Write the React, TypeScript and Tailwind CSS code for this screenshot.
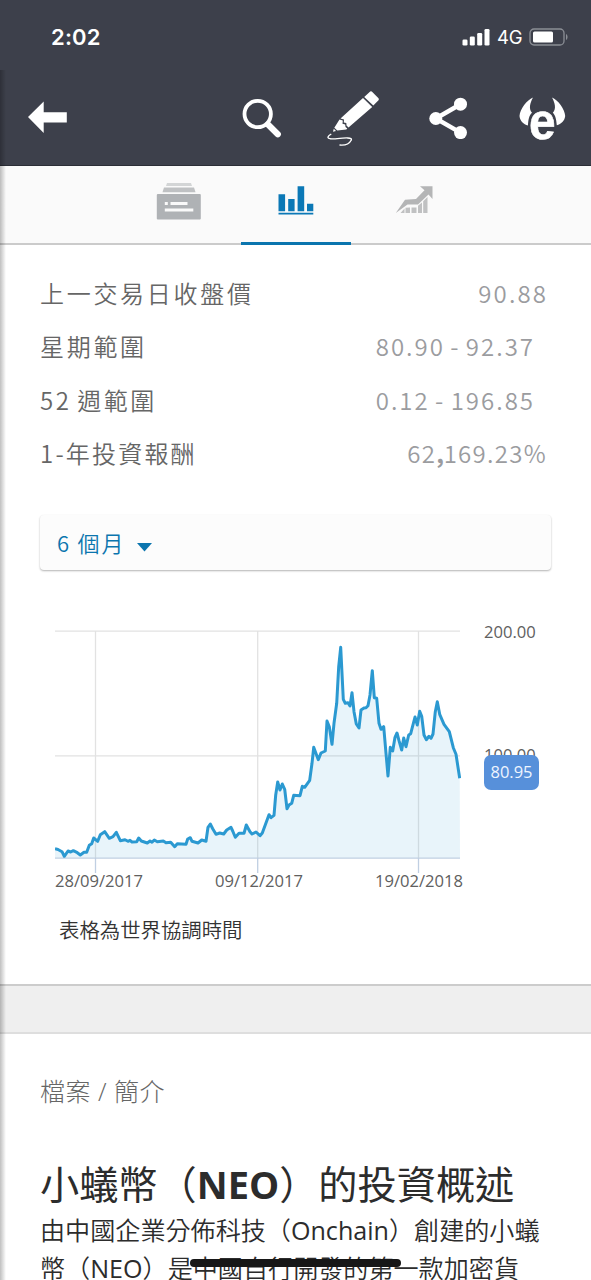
import type { ReactNode } from 'react'

const STATS = [
  { label: '上一交易日收盤價', value: '90.88', labelStyle: 'tracking-[2.7px]', valueStyle: 'pr-[43px] tracking-[2.1px]' },
  { label: '星期範圍', value: '80.90 - 92.37', labelStyle: 'tracking-[2.7px]', valueStyle: 'pr-[56px] tracking-[2px]' },
  { label: '52 週範圍', value: '0.12 - 196.85', labelStyle: 'tracking-[2.5px]', valueStyle: 'pr-[56px] tracking-[2px]' },
  { label: '1-年投資報酬', value: <>62<b className="tracking-[-0.5px]">,</b>169.23%</>, labelStyle: 'tracking-[2.2px]', valueStyle: 'pr-[44px] tracking-[1.3px]' },
]

const DATES = ['28/09/2017', '09/12/2017', '19/02/2018']

// x, y pairs in the chart's own viewBox
const LINE =
  '55,848.7 58,849.5 62,851.7 64.3,856.3 68,851 70.7,852 73.3,850.7 77.3,852.7 80.3,855 84,852.3 86.7,852.3 89.3,845.3 91.7,843.7 93.7,838 97.7,841.3 100.3,834.7 104.7,831.7 109.3,838.3 113,836.7 116.3,832.3 120.3,840.7 125,839.7 128,841.3 130,840.3 132,842 136.7,841.7 138.7,838 141.3,841 147.3,843 150,841 152,842.3 154.3,840 157.3,841.7 163.3,841 166,842.7 170.7,842.3 174.7,846.7 177.3,843.7 186,844.3 187.7,839 190.3,837.7 192,841.3 198,843 201.7,840 206,841.3 208,827.3 210.3,824 212.7,828.7 216,834.3 219.7,833 223.7,834 226.7,830 231,827.3 232.7,831 235.3,837.3 239,833.3 244,833.3 246.3,825 250,831.7 252,834 256,832 260,835.7 262.3,833 269,814.7 271,817.7 274,815.3 275.7,795 277.7,782 280,790 282.3,784 284.7,789.3 287,808.7 289,805 291.7,803.3 293.7,795.3 300,795.7 302.3,786.3 304.7,787.3 309.7,780.3 312,763.3 313.7,747.3 318.3,759.7 321,753 325.3,751 327,721 329.3,726.7 332,744.3 334,723.3 336.7,703.3 338.7,666.7 340.7,647.3 343.3,699.3 345.3,703.3 348,702.7 350,706 352,692.7 354,711.7 356.3,724 359,728 361,710 364,708 366,707.7 368,705.7 370,695 372.3,670.7 374.3,697.7 376.7,698.3 379,723.3 381,729.3 383.7,726.7 386,753.3 388,776 390.3,747.3 392.7,751 395,737.3 397,733 399,740.7 401.7,750 403.7,738 406,746.7 408.7,735 410.7,733.7 415,717 417.3,725 419.7,711.3 421.7,716.3 424,735 426.3,739.7 429,736.3 431,738.3 433,734 435.3,711.7 437.3,701.7 439.7,714.3 444,724.3 449.3,731.7 453.3,747.7 456,754.3 459.7,778.3'

function StatusBar() {
  return (
    <div className="flex h-[70px] items-start justify-between pl-[51px] pr-[22px] pt-[25px] text-white">
      <span className="font-[Inter,sans-serif] text-[22px] font-semibold leading-6 tracking-[0.2px]">2:02</span>
      <div className="flex items-center">
        <svg width="29" height="18" viewBox="0 0 29 18" fill="white">
          <rect x="0.5" y="11.5" width="5" height="6" rx="1.3" />
          <rect x="7.8" y="8.5" width="5" height="9" rx="1.3" />
          <rect x="15.2" y="5" width="5" height="12.5" rx="1.3" />
          <rect x="22.5" y="1" width="5" height="16.5" rx="1.3" />
        </svg>
        <span className="ml-[6px] w-[26px] font-[Inter,sans-serif] text-[18.5px] leading-6 tracking-[-0.3px]">4G</span>
        <svg className="ml-[6px]" width="40" height="18" viewBox="0 0 40 18">
          <rect x="1" y="1" width="34" height="16" rx="4" fill="none" stroke="#8b8e95" strokeWidth="1.3" />
          <rect x="4" y="3.5" width="20" height="11" rx="1.5" fill="white" />
          <path d="M37 6v6c2-1 2-5 0-6z" fill="#8b8e95" />
        </svg>
      </div>
    </div>
  )
}

function Toolbar() {
  return (
    <div className="flex h-[95px] items-center pl-[28px] text-white">
      <svg className="-mt-[2px]" width="39" height="32" viewBox="0 0 39 32" fill="white">
        <path d="M0 16 15.7 0.5V11.2H38.8V21.6H15.7V32z" />
      </svg>
      <svg className="ml-[175px]" width="40" height="40" viewBox="0 0 40 40" fill="none" stroke="white">
        <circle cx="15.7" cy="16" r="13.2" strokeWidth="3.8" />
        <path d="m26 26.5 9.8 9.7" strokeWidth="6.2" strokeLinecap="round" />
      </svg>
      {/* pencil with a scribble under its tip */}
      <svg className="ml-[45px]" width="54" height="58" viewBox="0 0 54 58" fill="white">
        <path d="M37.2 8 43.2 2.4Q44 1.8 44.8 2.6L51.5 9.3Q52.3 10.3 51.5 11.3L46.3 16.5z" />
        <path d="M36 9.1 45.2 18 21.5 38.5 19.5 36.5 19.3 34 16.8 33.5 17 30.5 13.5 29.5z" />
        <path d="m12.5 30.5 3.3 1-.3 3.2 2.7.8.3 2.5 1.8 1.6-1 .9-9 1-3-2.7z" />
        <path d="m6.8 39.8 2.2 2.2-3 .7z" />
        <path d="M4.3 45C-1 48 .2 50.3 7 49.8S27 47.5 24 51.5C22.5 54.5 18 56.5 12.5 56" fill="none" stroke="white" strokeWidth="1.3" />
      </svg>
      <svg className="ml-[48px]" width="39" height="42" viewBox="0 0 39 42" fill="white">
        <circle cx="6.8" cy="21.5" r="6.5" />
        <circle cx="31.5" cy="7.2" r="6.5" />
        <circle cx="31.5" cy="35.6" r="6.5" />
        <path d="M31.5 7.2 6.8 21.5l24.7 14.1" fill="none" stroke="white" strokeWidth="4.5" />
      </svg>
      <svg className="ml-[51px] overflow-visible" width="48" height="46" viewBox="0 0 48 46" fill="white">
        <path d="M14 2.5C8 5 1 14 .5 21c.6 5.5 4 8 8.4 9.5C9.5 24 10 20.5 13 17.8 9.5 14 11 8 14 2.5z" />
        <path d="M33 2.5C39 5 45.8 14 46.2 21c-.6 5-4 8-8.4 9.2C37.2 24 36.5 20.5 33.8 17.8 37.5 14 36 8 33 2.5z" />
        <text x="0" y="0" transform="translate(10 44.4) scale(.92 1)" className="font-['Liberation_Sans',sans-serif] text-[52px] font-bold" stroke="white" strokeWidth=".6">e</text>
      </svg>
    </div>
  )
}

function Tab({ active, children }: { active?: boolean; children: ReactNode }) {
  return (
    <div className={`-mb-[2px] flex h-[79px] w-[110px] justify-center border-b-[3px] pt-[17px] ${active ? 'border-[#0b75ae]' : 'border-transparent'}`}>
      {children}
    </div>
  )
}

function Tabs() {
  return (
    <div className="flex h-[79px] justify-center gap-[8px] border-b-2 border-[#cbcbcb] bg-[#fafafa]">
      <Tab>
        <svg className="ml-[2px]" width="46" height="37" viewBox="0 0 46 37">
          <path d="M11 0h24l1 3H10z" fill="#d3d5d6" />
          <path d="M8 4.5h30l1.5 4.8H6.5z" fill="#bfc1c3" />
          <rect x=".8" y="11" width="44" height="25.5" rx="1" fill="#afb2b5" />
          <path d="M8.8 19h3v3h-3zM14.5 19h17v3h-17zM8.8 25.5h28.5v3H8.8z" fill="#fafafa" />
        </svg>
      </Tab>
      <Tab active>
        <svg width="36" height="33" viewBox="0 0 36 33" fill="#0b78b6">
          <path d="M.5 11.2h6.6v17H.5zM10.2 16h6.4v12.2h-6.4zM19.6 3.2h6.6v25h-6.6zM29 20.8h6.3v7.4H29zM.5 29.8h34.8v1.7H.5z" />
        </svg>
      </Tab>
      <Tab>
        <svg className="ml-px" width="38" height="33" viewBox="0 0 38 33" fill="#b4b5b6">
          <path d="M.8 30 10 16.8l11-.8 8.5-8.8L25 3.2h12.5V16L33.5 11.5 23 21.5H12.5z" />
          <path d="M5.5 30l4-4.5V30zM10.5 24.8l4.5-.2V30h-4.5zM16.5 24.6h5V30h-5zM23 22.8l4-3.3V30h-4zM28.2 18.2l4.3-4.2v16h-4.3z" fill="#c0c1c2" />
        </svg>
      </Tab>
    </div>
  )
}

function Chart() {
  return (
    <div className="relative mt-[55px] h-[274px] pl-[55px] pt-[3px]">
      <svg width="406" height="246" viewBox="55 628 406 246">
        <path d="M55 631.2h405M55 755.8h405M95.5 631v228M257.7 631v228M418.5 631v228" stroke="#e2e2e2" strokeWidth="1.3" />
        <polygon points={`55,858 ${LINE} 460,858`} fill="#2d9dd3" fillOpacity=".11" />
        <path d="M55 858.2h405M95.5 858v15M257.7 858v15M418.5 858v15" stroke="#c0cfe2" strokeWidth="1.3" />
        <polyline points={LINE} fill="none" stroke="#2b99d1" strokeWidth="3" strokeLinejoin="round" />
      </svg>
      <div className="-mt-[5px] flex gap-[70px] font-['Open_Sans',sans-serif] text-[16.6px] leading-6 text-[#606060]">
        {DATES.map((date) => <span key={date} className="w-[90px]">{date}</span>)}
      </div>
      {/* Price scale */}
      <div className="absolute left-[484px] top-[-5px] font-['Open_Sans',sans-serif] text-[16.6px] leading-6 text-[#606060]">
        <div>200.00</div>
        <div className="mt-[99px]">100.00</div>
      </div>
      <div className="absolute left-[484px] top-[130px] flex h-[35px] w-[55px] items-center justify-center rounded-[7px] bg-[#5790da] font-['Open_Sans',sans-serif] text-[16.5px] text-[#eef5ff]">80.95</div>
    </div>
  )
}

export default function App() {
  return (
    <div className="relative h-[1280px] w-[591px] overflow-hidden bg-white font-['Noto_Sans_CJK_TC',sans-serif]">
      <header className="border-b border-[#2b2e36] bg-[#3d404b]">
        <StatusBar />
        <Toolbar />
      </header>
      <Tabs />

      <section className="h-[741px] border-b-2 border-[#cccccc]">
        <div className="pt-[21px]">
          {STATS.map((row) => (
            <div key={row.label} className="flex h-[53.5px] items-center justify-between pl-[40px] text-[24px] font-[350]">
              <span className={`text-[#666666] [word-spacing:-2px] ${row.labelStyle}`}>{row.label}</span>
              <span className={`text-[#9b9c9f] [word-spacing:-2px] ${row.valueStyle}`}>{row.value}</span>
            </div>
          ))}
        </div>

        <div className="ml-[40px] mt-[35px] flex h-[55px] w-[511px] items-center rounded-[4px] bg-[#fcfcfc] pl-[17px] shadow-[0_1px_2px_rgba(0,0,0,0.3)]">
          <span className="text-[22px] font-[350] tracking-[2.2px] text-[#0b75ae] [word-spacing:-1px]">6 個月</span>
          <svg className="ml-[11px] mt-[9px]" width="15" height="9" viewBox="0 0 15 9" fill="#0b75ae">
            <path d="M0 0h15L7.5 8.5z" />
          </svg>
        </div>

        <Chart />
        <p className="pl-[59px] text-[20.4px] font-[350] leading-[60px] text-[#333333]">表格為世界協調時間</p>
      </section>

      <div className="h-[48px] border-b-2 border-[#dedede] bg-[#efefef]" />

      <section className="pl-[40px] text-[#2c2c2c]">
        <p className="mt-[39px] font-['Open_Sans','Noto_Sans_CJK_TC',sans-serif] text-[25px] font-light leading-9 tracking-[0.5px] text-[#666666]">檔案 / 簡介</p>
        <h1 className="mt-[50px] whitespace-nowrap font-['Open_Sans','Noto_Sans_CJK_TC',sans-serif] text-[39.2px] font-normal leading-[50px]">
          小蟻幣（<b className="text-[38px]">NEO</b>）的投資概述
        </h1>
        <p className="mt-[3px] whitespace-nowrap font-['Open_Sans','Noto_Sans_CJK_TC',sans-serif] text-[25.1px] font-[350] leading-[37.5px]">
          由中國企業分佈科技（<span className="font-normal">Onchain</span>）創建的小蟻<br />
          幣（<span className="font-normal">NEO</span>）是中國自行開發的第一款加密貨
        </p>
      </section>

      {/* Page edge shadow and home indicator */}
      <div className="absolute bottom-0 left-0 top-[70px] w-[6px] bg-gradient-to-r from-black/25 to-transparent" />
      <div className="absolute bottom-[13px] left-[190px] h-[8px] w-[211px] rounded-full bg-[#171717]" />
    </div>
  )
}
